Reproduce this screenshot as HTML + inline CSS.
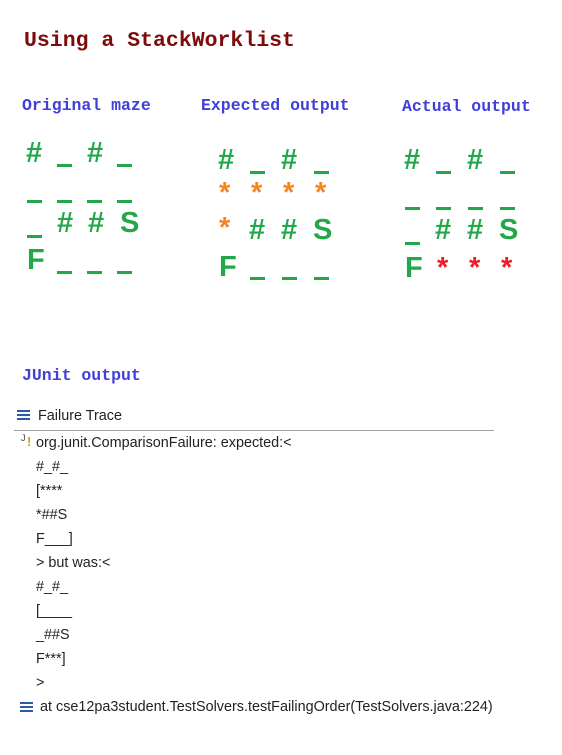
<!DOCTYPE html>
<html><head><meta charset="utf-8"><style>
body{margin:0;width:562px;height:755px;background:#fff;position:relative;overflow:hidden;font-family:"Liberation Sans",sans-serif}
.a{position:absolute;white-space:nowrap}
.h{font-family:"Liberation Mono",monospace;font-weight:bold}
.m{position:absolute;font:bold 29px/24px "Liberation Sans",sans-serif;color:#22a84a}
.o{color:#f5861f}.r{color:#ee1c25}
.u{position:absolute;width:15px;height:3px;background:#22a84a}
.t{position:absolute;left:36px;font-size:14.4px;color:#222;line-height:16px}
</style></head><body>
<div class="a h" style="left:24px;top:29px;font-size:21.5px;color:#7d0b0b">Using a StackWorklist</div>
<div class="a h" style="left:22px;top:96px;font-size:16.5px;color:#4040d8">Original maze</div>
<div class="a h" style="left:201px;top:96px;font-size:16.5px;color:#4040d8">Expected output</div>
<div class="a h" style="left:402px;top:97px;font-size:16.5px;color:#4040d8">Actual output</div>

<!-- original -->
<div class="m" style="left:26px;top:141px">#</div><div class="u" style="left:57px;top:164px"></div><div class="m" style="left:87px;top:141px">#</div><div class="u" style="left:117px;top:164px"></div>
<div class="u" style="left:27px;top:200px"></div><div class="u" style="left:57px;top:200px"></div><div class="u" style="left:87px;top:200px"></div><div class="u" style="left:117px;top:200px"></div>
<div class="u" style="left:27px;top:235px"></div><div class="m" style="left:57px;top:211px">#</div><div class="m" style="left:88px;top:211px">#</div><div class="m" style="left:120px;top:211px">S</div>
<div class="m" style="left:27px;top:248px">F</div><div class="u" style="left:57px;top:271px"></div><div class="u" style="left:87px;top:271px"></div><div class="u" style="left:117px;top:271px"></div>

<!-- expected -->
<div class="m" style="left:218px;top:148px">#</div><div class="u" style="left:250px;top:171px"></div><div class="m" style="left:281px;top:148px">#</div><div class="u" style="left:314px;top:171px"></div>
<div class="m o" style="left:219px;top:181px">*</div><div class="m o" style="left:251px;top:181px">*</div><div class="m o" style="left:283px;top:181px">*</div><div class="m o" style="left:315px;top:181px">*</div>
<div class="m o" style="left:219px;top:216px">*</div><div class="m" style="left:249px;top:218px">#</div><div class="m" style="left:281px;top:218px">#</div><div class="m" style="left:313px;top:218px">S</div>
<div class="m" style="left:219px;top:255px">F</div><div class="u" style="left:250px;top:277px"></div><div class="u" style="left:282px;top:277px"></div><div class="u" style="left:314px;top:277px"></div>

<!-- actual -->
<div class="m" style="left:404px;top:148px">#</div><div class="u" style="left:436px;top:171px"></div><div class="m" style="left:467px;top:148px">#</div><div class="u" style="left:500px;top:171px"></div>
<div class="u" style="left:405px;top:207px"></div><div class="u" style="left:436px;top:207px"></div><div class="u" style="left:468px;top:207px"></div><div class="u" style="left:500px;top:207px"></div>
<div class="u" style="left:405px;top:242px"></div><div class="m" style="left:435px;top:218px">#</div><div class="m" style="left:467px;top:218px">#</div><div class="m" style="left:499px;top:218px">S</div>
<div class="m" style="left:405px;top:256px">F</div><div class="m r" style="left:437px;top:256px">*</div><div class="m r" style="left:469px;top:256px">*</div><div class="m r" style="left:501px;top:256px">*</div>

<div class="a h" style="left:22px;top:366px;font-size:16.5px;color:#4040d8">JUnit output</div>

<svg class="a" style="left:17px;top:409px" width="14" height="12"><rect y="1" width="13" height="2" fill="#2a5aa8"/><rect y="5" width="13" height="2" fill="#2a5aa8"/><rect y="9" width="13" height="2" fill="#2a5aa8"/></svg>
<div class="t" style="left:38px;top:408px">Failure Trace</div>
<div class="a" style="left:14px;top:430px;width:480px;height:1px;background:#a0a0a0"></div>
<div class="a" style="left:21px;top:433px;font-size:9px;color:#444">J</div>
<div class="a" style="left:27px;top:434px;font-size:13px;font-weight:bold;color:#d8a000">!</div>
<div class="t" style="top:435px">org.junit.ComparisonFailure: expected:&lt;</div>
<div class="t" style="top:459px">#_#_</div>
<div class="t" style="top:483px">[****</div>
<div class="t" style="top:507px">*##S</div>
<div class="t" style="top:531px">F___]</div>
<div class="t" style="top:555px">&gt; but was:&lt;</div>
<div class="t" style="top:579px">#_#_</div>
<div class="t" style="top:603px">[____</div>
<div class="t" style="top:627px">_##S</div>
<div class="t" style="top:651px">F***]</div>
<div class="t" style="top:675px">&gt;</div>
<svg class="a" style="left:20px;top:701px" width="14" height="12"><rect y="1" width="13" height="2" fill="#2a5aa8"/><rect y="5" width="13" height="2" fill="#2a5aa8"/><rect y="9" width="13" height="2" fill="#2a5aa8"/></svg>
<div class="t" style="left:40px;top:699px">at cse12pa3student.TestSolvers.testFailingOrder(TestSolvers.java:224)</div>
</body></html>
